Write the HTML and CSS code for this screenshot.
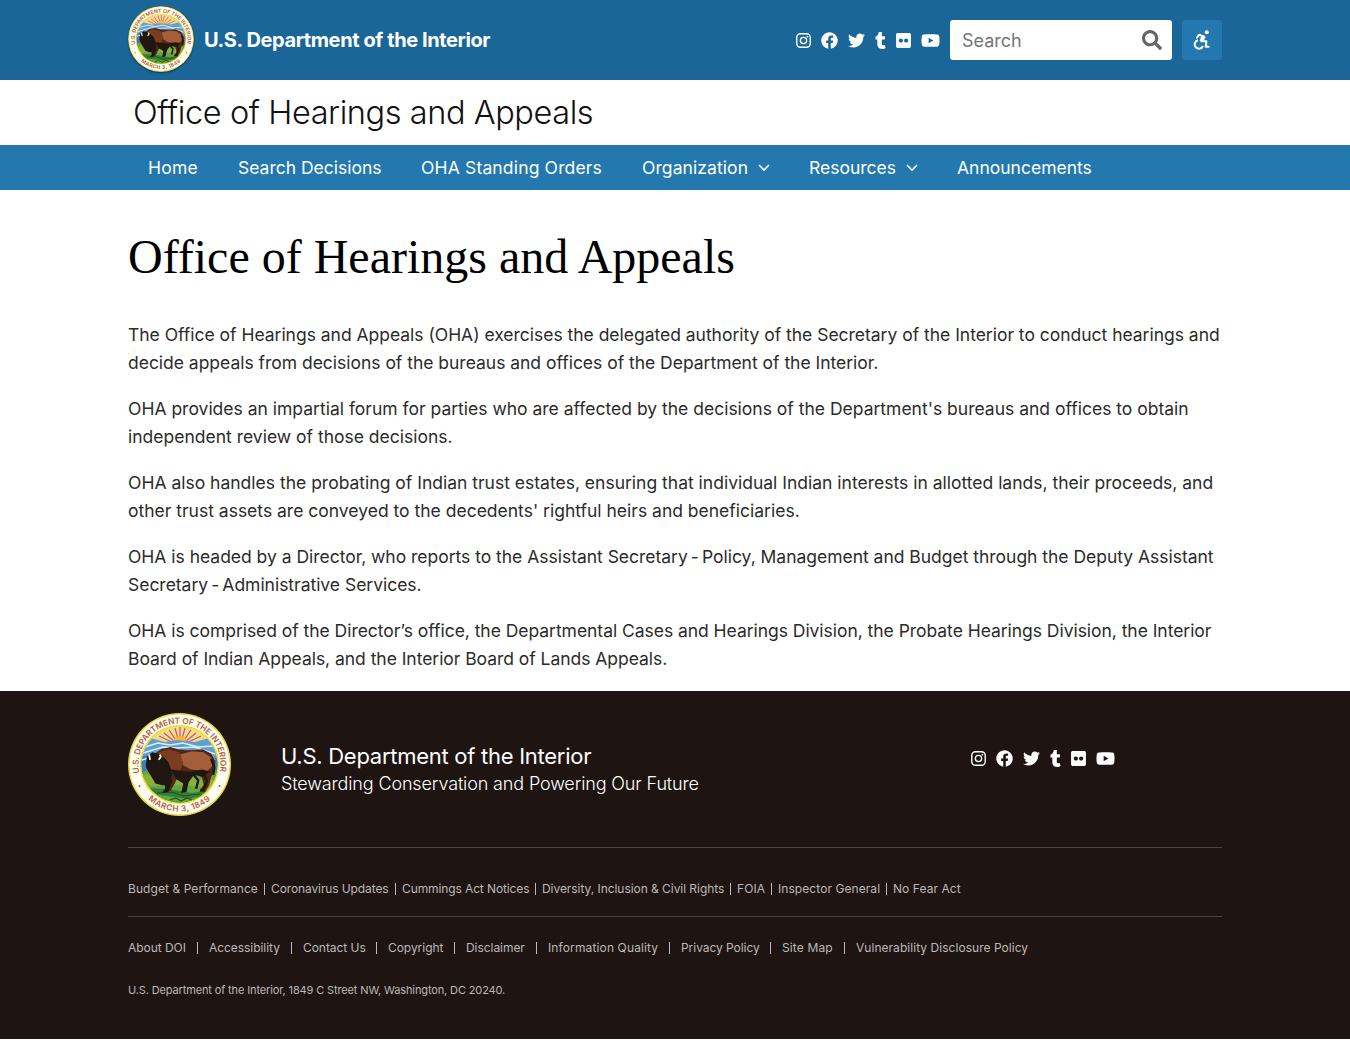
FILE: index.html
```html
<!DOCTYPE html>
<html lang="en">
<head>
<meta charset="utf-8">
<title>Office of Hearings and Appeals | U.S. Department of the Interior</title>
<link rel="stylesheet" href="styles.css">
</head>
<body>
<svg class="defs" aria-hidden="true">
  <defs>
    <path id="arc-top" d="M11.4 60A41 41 0 1 1 91.6 60"/>
    <path id="arc-bottom" d="M4.5 51.5A47 47 0 0 0 98.5 51.5"/>
    <clipPath id="scene"><circle cx="51.5" cy="51.5" r="38"/></clipPath>
    <symbol id="seal-art" viewBox="0 0 103 103">
      <circle cx="51.5" cy="51.5" r="51.5" fill="#e8d73b"/>
      <circle cx="51.5" cy="51.5" r="50" fill="#fffdf0"/>
      <circle cx="51.5" cy="51.5" r="39.6" fill="#f1dc32"/>
      <g clip-path="url(#scene)">
        <path fill="#f3dc86" d="M10 10h83v30H10z"/>
        <path stroke="#c6548f" stroke-width="1.2" d="M52 33V14M52 33l-5-18M52 33l5-18M52 33L41 17M52 33l11-16M52 33L36 20M52 33l16-13M52 33L31 23M52 33l21-10"/>
        <path fill="#f7b72e" d="M45 29a7 6 0 0 1 14 0z"/>
        <path fill="#5e9fd6" d="M10 34l12-9 15 4 13-2 17 2 14-4 12 8v33H10z"/>
        <path fill="#3b7fc0" d="M10 45l23-7 22 1 38 7v18H10z"/>
        <path fill="none" stroke="#dcedf7" stroke-width="1.5" d="M17 34l13-4 12 2 13-2 15 4 16-1M15 40l20-6 14 1 17-1 21 7M66 37l21 10M14 47l10-3"/>
        <path fill="#62a744" d="M10 60l14-4 30 5 39-3v34H10z"/>
        <path fill="#8cae3c" d="M14 62l19-2 25 5 31 2-6 8-31-3-32 1z"/>
        <path fill="#347f35" d="M18 75l23 1 23 4 24-4-15 17H30z"/>
        <path fill="#5fa83f" d="M24 81l16 2 20 3 17-4-10 10H36z"/>
        <path fill="none" stroke="#244f26" stroke-width="1.2" d="M29 80l15-1 11 4 17-2M42 87l6-2 5 3 6-3 5 2"/>
        <g transform="translate(-2.5 -4.5) scale(1.07)">
        <path fill="#512817" d="M19 55l2-9 7-4 5-4 9-2 7 2 10 1 13-1 8 4 4 7-1 9-3 6-2 8-4 6h-5l4-7-2-8-7-4-7 3-8 1-3 7-4 7-6 1 3-8-4-4-7-4-6-2z"/>
        <path fill="#a65e38" d="M51 43l11-3 11 1 7 5 1 8-6 6-4-2-10-1-7-4z"/>
        <path fill="#7a3d20" d="M31 41l9-3 10 3 4 10-4 10-9-2-9-7z"/>
        <path fill="#201713" d="M20 45l5-4 8 2 7 7 4 10-2 9-7 3-7-2-6-10-3-7zM36 66l8 1-4 11-6 1 3-4zM43 57l17 2 12-2 7 2-7 5-8-2-5 7-2 9-5 1 2-9-7-4z"/>
        <path fill="none" stroke="#201713" stroke-width="2.2" d="M73 60l3 8-3 8h-3M80 47l3 8-1 7M63 61l5 6-2 8"/>
        <path fill="none" stroke="#fff7d4" stroke-width="1.7" d="M22 43l1 5M31 48l2-3-1-2"/>
        </g>
      </g>
      <g font-family="Inter, sans-serif" fill="#b15c3e" font-weight="600">
        <text font-size="8.2" letter-spacing="-0.08"><textPath href="#arc-top">U.S. DEPARTMENT OF THE INTERIOR</textPath></text>
        <text font-size="8.2" letter-spacing="0.5"><textPath href="#arc-bottom" startOffset="50%" text-anchor="middle">MARCH 3, 1849</textPath></text>
        <circle cx="11.5" cy="73" r="1"/><circle cx="91.5" cy="73" r="1"/>
      </g>
    </symbol>
    <symbol id="i-instagram" viewBox="0 0 448 512"><rect x="21" y="53" width="406" height="406" rx="112" fill="none" stroke="currentColor" stroke-width="42"/><circle cx="224" cy="256" r="95" fill="none" stroke="currentColor" stroke-width="41"/><circle cx="343" cy="137" r="27"/></symbol>
    <symbol id="i-facebook" viewBox="0 0 512 512"><path d="M504 256C504 119 393 8 256 8S8 119 8 256c0 123.78 90.69 226.38 209.25 245V327.69h-63V256h63v-54.64c0-62.15 37-96.48 93.67-96.48 27.14 0 55.52 4.84 55.52 4.84v61h-31.28c-30.8 0-40.41 19.12-40.41 38.73V256h68.78l-11 71.69h-57.78V501C413.31 482.38 504 379.78 504 256z"/></symbol>
    <symbol id="i-twitter" viewBox="0 0 512 512"><path d="M459.37 151.716c.325 4.548.325 9.097.325 13.645 0 138.72-105.583 298.558-298.558 298.558-59.452 0-114.68-17.219-161.137-47.106 8.447.974 16.568 1.299 25.34 1.299 49.055 0 94.213-16.568 130.274-44.832-46.132-.975-84.792-31.188-98.112-72.772 6.498.974 12.995 1.624 19.818 1.624 9.421 0 18.843-1.3 27.614-3.573-48.081-9.747-84.143-51.98-84.143-102.985v-1.299c13.969 7.797 30.214 12.67 47.431 13.319-28.264-18.843-46.781-51.005-46.781-87.391 0-19.492 5.197-37.36 14.294-52.954 51.655 63.675 129.3 105.258 216.365 109.807-1.624-7.797-2.599-15.918-2.599-24.04 0-57.828 46.782-104.934 104.934-104.934 30.213 0 57.502 12.67 76.67 33.137 23.715-4.548 46.456-13.32 66.599-25.34-7.798 24.366-24.366 44.833-46.132 57.827 21.117-2.273 41.584-8.122 60.426-16.243-14.292 20.791-32.161 39.308-52.628 54.253z"/></symbol>
    <symbol id="i-tumblr" viewBox="0 0 320 512"><path d="M309.8 480.3c-13.6 14.5-50 31.7-97.4 31.7-120.8 0-147-88.8-147-140.6v-144H17.9c-5.5 0-10-4.5-10-10v-68c0-7.2 4.5-13.6 11.3-16 62-21.8 81.5-76 84.3-117.1.8-11 6.5-16.3 16.1-16.3h70.9c5.5 0 10 4.5 10 10v115.2h83c5.5 0 10 4.4 10 9.9v81.7c0 5.5-4.5 10-10 10h-83.4V360c0 34.2 23.7 53.6 68 35.8 4.8-1.9 9-3.2 12.7-2.2 3.5.9 5.8 3.4 7.4 7.9l22 64.3c1.8 5 3.3 10.6-.4 14.5z"/></symbol>
    <symbol id="i-flickr" viewBox="0 0 448 512"><path d="M400 32H48C21.5 32 0 53.5 0 80v352c0 26.5 21.5 48 48 48h352c26.5 0 48-21.5 48-48V80c0-26.5-21.5-48-48-48zM144.5 319c-35.1 0-63.5-28.4-63.5-63.5s28.4-63.5 63.5-63.5 63.5 28.4 63.5 63.5-28.4 63.5-63.5 63.5zm159 0c-35.1 0-63.5-28.4-63.5-63.5s28.4-63.5 63.5-63.5 63.5 28.4 63.5 63.5-28.4 63.5-63.5 63.5z"/></symbol>
    <symbol id="i-youtube" viewBox="0 0 576 512"><path d="M549.655 124.083c-6.281-23.65-24.787-42.276-48.284-48.597C458.781 64 288 64 288 64S117.22 64 74.629 75.486c-23.497 6.322-42.003 24.947-48.284 48.597-11.412 42.867-11.412 132.305-11.412 132.305s0 89.438 11.412 132.305c6.281 23.65 24.787 41.5 48.284 47.821C117.22 448 288 448 288 448s170.78 0 213.371-11.486c23.497-6.321 42.003-24.171 48.284-47.821 11.412-42.867 11.412-132.305 11.412-132.305s0-89.438-11.412-132.305zm-317.51 213.508V175.185l142.739 81.205-142.739 81.201z"/></symbol>
    <symbol id="i-search" viewBox="0 0 512 512"><path d="M505 442.7L405.3 343c-4.5-4.5-10.6-7-17-7H372c27.6-35.3 44-79.7 44-128C416 93.1 322.9 0 208 0S0 93.1 0 208s93.1 208 208 208c48.3 0 92.7-16.4 128-44v16.3c0 6.4 2.5 12.5 7 17l99.7 99.7c9.4 9.4 24.6 9.4 33.9 0l28.3-28.3c9.4-9.4 9.4-24.6.1-34zM208 336c-70.7 0-128-57.2-128-128 0-70.7 57.2-128 128-128 70.7 0 128 57.2 128 128 0 70.7-57.2 128-128 128z"/></symbol>
  </defs>
</svg>

<header class="top">
  <div class="wrap top-row">
    <a class="brand"><svg class="seal seal-sm"><use href="#seal-art"/></svg><span>U.S. Department of the Interior</span></a>
    <div class="tools">
      <div class="social">
        <svg class="ic w-sq"><use href="#i-instagram"/></svg><svg class="ic w-em"><use href="#i-facebook"/></svg><svg class="ic w-em"><use href="#i-twitter"/></svg><svg class="ic w-t"><use href="#i-tumblr"/></svg><svg class="ic w-sq"><use href="#i-flickr"/></svg><svg class="ic w-yt"><use href="#i-youtube"/></svg>
      </div>
      <div class="search"><span>Search</span><svg><use href="#i-search"/></svg></div>
      <a class="access"><svg viewBox="0 0 18 20" fill="none" stroke="#fff" stroke-width="2"><circle cx="13.8" cy="2.3" r="2" fill="#fff" stroke="none"/><path d="M4 7.6l2.2-2.9 5 1.9" stroke-linejoin="round" stroke-linecap="round"/><path d="M8.6 5.2l4 1.7-2.4 5-3.6-.9z" fill="#fff" stroke="none"/><path d="M8.4 11.3h5l-.7 5.4h2.9" stroke-linejoin="round" stroke-linecap="round"/><path d="M5 10.2a4.3 4.3 0 1 0 5 5.8"/></svg></a>
    </div>
  </div>
</header>
<div class="bureau"><div class="wrap">Office of Hearings and Appeals</div></div>
<nav class="nav">
  <ul class="wrap">
    <li class="n-home">Home</li><li>Search Decisions</li><li class="n-orders">OHA Standing Orders</li>
    <li class="n-org">Organization<svg class="chev" viewBox="0 0 12 8"><path d="M1 1l5 5 5-5"/></svg></li>
    <li>Resources<svg class="chev" viewBox="0 0 12 8"><path d="M1 1l5 5 5-5"/></svg></li>
    <li>Announcements</li>
  </ul>
</nav>
<main class="wrap content">
  <h1>Office of Hearings and Appeals</h1>
  <p class="intro">The Office of Hearings and Appeals (OHA) exercises the delegated authority of the Secretary of the Interior to conduct hearings and<br>decide appeals from decisions of the bureaus and offices of the Department of the Interior.</p>
  <p>OHA provides an impartial forum for parties who are affected by the decisions of the Department's bureaus and offices to obtain<br>independent review of those decisions.</p>
  <p>OHA also handles the probating of Indian trust estates, ensuring that individual Indian interests in allotted lands, their proceeds, and<br>other trust assets are conveyed to the decedents' rightful heirs and beneficiaries.</p>
  <p class="intro">OHA is headed by a Director, who reports to the Assistant Secretary<span class="dash"> - </span>Policy, Management and Budget through the Deputy Assistant<br>Secretary<span class="dash"> - </span>Administrative Services.</p>
  <p class="snug">OHA is comprised of the Director’s office, the Departmental Cases and Hearings Division, the Probate Hearings Division, the Interior<br>Board of Indian Appeals, and the Interior Board of Lands Appeals.</p>
</main>
<footer class="footer">
  <div class="wrap">
    <div class="foot-head">
      <svg class="seal seal-lg"><use href="#seal-art"/></svg>
      <div class="foot-title"><div class="dept">U.S. Department of the Interior</div><div class="tag">Stewarding Conservation and Powering Our Future</div></div>
      <div class="social">
        <svg class="ic w-sq"><use href="#i-instagram"/></svg><svg class="ic w-em"><use href="#i-facebook"/></svg><svg class="ic w-em"><use href="#i-twitter"/></svg><svg class="ic w-t"><use href="#i-tumblr"/></svg><svg class="ic w-sq"><use href="#i-flickr"/></svg><svg class="ic w-yt"><use href="#i-youtube"/></svg>
      </div>
    </div>
    <ul class="links primary"><li>Budget &amp; Performance</li><li>Coronavirus Updates</li><li>Cummings Act Notices</li><li>Diversity, Inclusion &amp; Civil Rights</li><li>FOIA</li><li>Inspector General</li><li>No Fear Act</li></ul>
    <ul class="links secondary"><li>About DOI</li><li>Accessibility</li><li>Contact Us</li><li>Copyright</li><li>Disclaimer</li><li class="wide">Information Quality</li><li>Privacy Policy</li><li class="wide">Site Map</li><li class="wide-sm">Vulnerability Disclosure Policy</li></ul>
    <address>U.S. Department of the Interior, 1849 C Street NW, Washington, DC 20240.</address>
  </div>
</footer>
</body>
</html>
```
FILE: styles.css
```css
* { box-sizing: border-box; }
body { margin: 0; background: #fff; font-family: Inter, "Liberation Sans", sans-serif; color: #2b2b2b; }
ul { list-style: none; margin: 0; padding: 0; }
.wrap { width: 1094px; margin: 0 auto; }
svg { display: block; flex: none; fill: currentColor; }
.defs { position: absolute; width: 0; height: 0; }

.top { height: 80px; background: #1a6698; color: #fff; }
.top-row { display: flex; justify-content: space-between; height: 80px; }
.brand { display: flex; align-items: center; gap: 10px; font-size: 20px; font-weight: 700; letter-spacing: -0.4px; white-space: nowrap; }
.seal-sm { width: 66px; height: 66px; margin-bottom: 2px; border-radius: 50%; box-shadow: 0 1px 2px #123a55; }
.seal-sm, .seal-lg { letter-spacing: 0; }
.tools { display: flex; align-items: center; }
.social { display: flex; align-items: center; gap: 10px; color: #fff; }
.ic { height: 17px; }
.w-sq { width: 15px; }
.w-em { width: 17px; }
.w-t { width: 11px; }
.w-yt { width: 19px; }
.tools .social { margin: 1px 10px 0 0; }
.search { display: flex; align-items: center; justify-content: space-between; width: 222px; height: 40px; padding: 0 10px 0 12px; border-radius: 3px; background: #fff; color: #757575; font-size: 18px; }
.search span { padding-top: 1px; }
.search svg { width: 20px; height: 20px; color: #666; }
.access { display: flex; align-items: center; justify-content: center; width: 40px; height: 40px; margin-left: 10px; border-radius: 3px; background: #2378b0; }
.access svg { width: 18px; height: 20px; fill: none; }

.bureau { height: 65px; color: #111; font-size: 32.5px; font-weight: 300; line-height: 65px; letter-spacing: -0.42px; }
.bureau .wrap { padding-left: 5px; }
.nav { height: 45px; background: #2378b0; color: #fff; font-size: 17.5px; line-height: 45px; white-space: nowrap; }
.nav ul { display: grid; grid-template-columns: 90px 183px 221px 167px 148px auto; padding-left: 20px; }
.nav li { display: flex; align-items: center; }
.n-home { letter-spacing: 0.25px; }
.n-orders { letter-spacing: 0.16px; }
.n-org { letter-spacing: 0.08px; }
.chev { width: 12px; height: 8px; margin-left: 10px; fill: none; stroke: #fff; stroke-width: 1.6; }

.content { height: 501px; padding-top: 35px; white-space: nowrap; }
h1 { margin: 0 0 32px; color: #000; font: 400 48px/64px "Liberation Serif", serif; }
.content p { margin: 0 0 18px; font-size: 17.5px; line-height: 28px; }
.content .intro { letter-spacing: -0.02px; }
.content .snug { letter-spacing: -0.04px; }
.dash { word-spacing: -1.8px; }

.footer { height: 348px; background: #1e1512; color: #fff; }
.foot-head { display: grid; grid-template-columns: 153px 690px auto; height: 157px; padding-top: 22px; border-bottom: 1px solid #4c4543; }
.seal-lg { width: 103px; height: 103px; }
.foot-title { padding-top: 30px; }
.dept { font-size: 22px; line-height: 27px; letter-spacing: -0.27px; }
.tag { font-size: 18px; font-weight: 300; line-height: 28px; letter-spacing: -0.14px; }
.foot-head .social { height: 17px; margin-top: 37px; }
.links { display: grid; color: #bcb8b7; font-size: 12px; line-height: 20px; white-space: nowrap; }
.links li { display: flex; align-items: center; }
.links li + li::before { content: ""; width: 1px; height: 12px; background: #bcb8b7; }
.primary { grid-template-columns: 136px 131px 140px 195px 41px 115px auto; height: 69px; padding-top: 31px; align-items: start; border-bottom: 1px solid #4c4543; letter-spacing: 0.07px; }
.primary li + li::before { margin-right: 6px; }
.secondary { grid-template-columns: 69px 94px 85px 78px 82px 133px 101px 74px auto; padding-top: 21px; letter-spacing: -0.05px; }
.secondary li + li::before { margin-right: 11px; }
.primary li:nth-child(2), .primary li:nth-child(3) { letter-spacing: -0.11px; }
.primary li:nth-child(4) { letter-spacing: -0.05px; }
.secondary .wide { letter-spacing: 0.13px; }
.secondary .wide-sm { letter-spacing: 0.04px; }
address { margin-top: 22px; color: #bcb8b7; font-size: 11px; font-style: normal; line-height: 20px; letter-spacing: -0.13px; }
```
